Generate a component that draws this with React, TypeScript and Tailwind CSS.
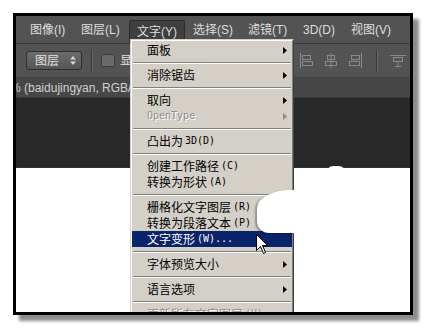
import React from "react";

type Item =
  | { kind: "sep" }
  | {
      kind: "item";
      cn: string;
      en?: string;
      arrow?: boolean;
      disabled?: boolean;
      active?: boolean;
    };

const items: Item[] = [
  { kind: "item", cn: "面板", arrow: true },
  { kind: "sep" },
  { kind: "item", cn: "消除锯齿", arrow: true },
  { kind: "sep" },
  { kind: "item", cn: "取向", arrow: true },
  { kind: "item", cn: "", en: "OpenType", arrow: true, disabled: true },
  { kind: "sep" },
  { kind: "item", cn: "凸出为 ", en: "3D(D)" },
  { kind: "sep" },
  { kind: "item", cn: "创建工作路径", en: "(C)" },
  { kind: "item", cn: "转换为形状", en: "(A)" },
  { kind: "sep" },
  { kind: "item", cn: "栅格化文字图层", en: "(R)" },
  { kind: "item", cn: "转换为段落文本", en: "(P)" },
  { kind: "item", cn: "文字变形", en: "(W)...", active: true },
  { kind: "sep" },
  { kind: "item", cn: "字体预览大小", arrow: true },
  { kind: "sep" },
  { kind: "item", cn: "语言选项", arrow: true },
  { kind: "sep" },
  { kind: "item", cn: "更新所有文字图层", en: "(U)", disabled: true },
];

function Arrow({ color }: { color: string }) {
  return (
    <svg width="4" height="7" viewBox="0 0 4 7" className="ml-auto">
      <path d="M0 0 L4 3.5 L0 7 Z" fill={color} />
    </svg>
  );
}

function AlignIcon({ kind }: { kind: "left" | "center" | "right" }) {
  const c = "#8a8a8a";
  return (
    <svg width="14" height="15" viewBox="0 0 14 15">
      {kind === "left" && (
        <>
          <rect x="0" y="0" width="1" height="15" fill={c} />
          <rect x="2.5" y="2.5" width="8" height="4" fill="none" stroke={c} />
          <rect x="2.5" y="8.5" width="10" height="4" fill="none" stroke={c} />
        </>
      )}
      {kind === "center" && (
        <>
          <rect x="6.5" y="0" width="1" height="15" fill={c} />
          <rect x="3.5" y="2.5" width="7" height="4" fill="none" stroke={c} />
          <rect x="1.5" y="8.5" width="11" height="4" fill="none" stroke={c} />
        </>
      )}
      {kind === "right" && (
        <>
          <rect x="13" y="0" width="1" height="15" fill={c} />
          <rect x="3.5" y="2.5" width="8" height="4" fill="none" stroke={c} />
          <rect x="1.5" y="8.5" width="10" height="4" fill="none" stroke={c} />
        </>
      )}
    </svg>
  );
}

function TopAlignIcon() {
  const c = "#8a8a8a";
  return (
    <svg width="16" height="12" viewBox="0 0 16 12">
      <rect x="0" y="0" width="16" height="1" fill={c} />
      <rect x="3.5" y="2.5" width="9" height="4" fill="none" stroke={c} />
      <rect x="7.5" y="7" width="1" height="4" fill={c} />
      <rect x="5" y="11" width="6" height="1" fill={c} />
    </svg>
  );
}

export default function App() {
  const menubar = [
    { t: "图像(I)", cls: "pl-[14px] w-[65px]" },
    { t: "图层(L)", cls: "w-[48px]" },
  ];
  const menubar2 = [
    { t: "选择(S)", cls: "ml-[8px] w-[55px]" },
    { t: "滤镜(T)", cls: "w-[55px]" },
    { t: "3D(D)", cls: "w-[48px]" },
    { t: "视图(V)", cls: "w-[50px]" },
  ];
  return (
    <div className="w-[425px] h-[328px] bg-white pt-[13px] pl-[13px] font-['Liberation_Sans','Noto_Sans_CJK_SC',sans-serif]">
      <div className="relative w-[400px] h-[302px] border-[3px] border-black overflow-hidden flex flex-col shadow-[6px_6px_3px_rgba(0,0,0,0.45)]">
        {/* Menu bar */}
        <div className="h-[28px] shrink-0 bg-[#535353] border-b border-[#3a3a3a] flex items-stretch text-[12px] text-[#dedede]">
          {menubar.map((m) => (
            <div key={m.t} className={`${m.cls} flex items-center shrink-0 whitespace-nowrap`}>
              {m.t}
            </div>
          ))}
          <div className="w-[56px] shrink-0 mt-[4px] bg-[#3f3f3f] border border-[#2c2c2c] border-b-0 rounded-t-[2px] pl-[7px] flex items-start pt-[2px] whitespace-nowrap">
            文字(Y)
          </div>
          {menubar2.map((m) => (
            <div key={m.t} className={`${m.cls} flex items-center shrink-0 whitespace-nowrap`}>
              {m.t}
            </div>
          ))}
        </div>

        {/* Toolbar */}
        <div className="h-[33px] shrink-0 bg-[#535353] flex items-center text-[12px] text-[#e0e0e0]">
          <div className="ml-[10px] w-[56px] h-[19px] rounded-[3px] border border-[#2e2e2e] bg-gradient-to-b from-[#6c6c6c] to-[#555555] flex items-center pl-[8px] pr-[5px]">
            <span>图层</span>
            <svg width="6" height="9" viewBox="0 0 6 9" className="ml-auto">
              <path d="M0 3.5 L3 0 L6 3.5 Z" fill="#d8d8d8" />
              <path d="M0 5.5 L3 9 L6 5.5 Z" fill="#d8d8d8" />
            </svg>
          </div>
          <div className="ml-[9px] w-[2px] h-[22px] flex">
            <div className="w-px bg-[#3a3a3a]" />
            <div className="w-px bg-[#676767]" />
          </div>
          <div className="ml-[8px] w-[14px] h-[13px] rounded-[2px] bg-[#6a6a6a] border border-[#3c3c3c]" />
          <span className="ml-[5px]">显</span>
          <div className="ml-[168px] flex items-center gap-[10px]">
            <AlignIcon kind="left" />
            <AlignIcon kind="center" />
            <AlignIcon kind="right" />
          </div>
          <div className="ml-[14px] w-[2px] h-[22px] flex">
            <div className="w-px bg-[#3a3a3a]" />
            <div className="w-px bg-[#676767]" />
          </div>
          <div className="ml-[12px]">
            <TopAlignIcon />
          </div>
        </div>

        {/* Document tab bar */}
        <div className="h-[21px] shrink-0 bg-[#474747] border-t border-[#3c3c3c] border-b border-dotted border-b-[#2a2a2a] flex items-center overflow-hidden text-[12px] text-[#d0d0d0] font-['Liberation_Sans',sans-serif]">
          <span className="ml-[-26px] whitespace-nowrap">100% (baidujingyan, RGB/8)</span>
        </div>

        {/* Dark canvas */}
        <div className="h-[70px] shrink-0 bg-[#282828] border-b border-dotted border-[#3a3a3a]" />

        {/* White document */}
        <div className="flex-1 bg-white" />

        {/* white bump */}
        <div className="absolute left-[311px] top-[150px] w-[18px] h-[6px] rounded-t-full bg-white" />

        {/* Dropdown menu */}
        <div className="absolute left-[114px] top-[23px] w-[164px] border border-t-[#d4d0c8] border-l-[#d4d0c8] border-r-[#404040] border-b-[#404040] bg-[#d4d0c8]">
          <div className="border border-t-white border-l-white border-r-[#808080] border-b-[#808080] py-px">
            {items.map((it, i) =>
              it.kind === "sep" ? (
                <div key={i} className="h-[9px] flex flex-col justify-center px-px">
                  <div className="h-px bg-[#808080]" />
                  <div className="h-px bg-white" />
                </div>
              ) : (
                <div
                  key={i}
                  className={`h-[16px] flex items-center pl-[15px] pr-[5px] whitespace-nowrap ${
                    it.active ? "bg-[#0a246a] text-white" : it.disabled ? "text-[#8c8c8c] [text-shadow:1px_1px_0_#ffffff]" : "text-black"
                  }`}
                >
                  {it.cn && <span className="text-[12px] font-['Noto_Sans_CJK_SC',sans-serif] leading-none">{it.cn}</span>}
                  {it.en && (
                    <span className={`text-[10px] font-['DejaVu_Sans_Mono',monospace] leading-none ${it.cn ? "ml-[2px]" : ""}`}>
                      {it.en}
                    </span>
                  )}
                  {it.arrow && <Arrow color={it.disabled ? "#8c8c8c" : "#000000"} />}
                </div>
              )
            )}
          </div>
        </div>

        {/* white annotation blob over the menu */}
        <div className="absolute left-[241px] top-[174px] w-[37px] h-[43px] bg-white rounded-tl-[34px_18px] rounded-bl-[12px] shadow-[-2px_1px_2px_rgba(0,0,0,0.3)]" />

        {/* cursor */}
        <svg width="13" height="21" viewBox="0 0 13 21" className="absolute left-[240px] top-[218px]">
          <path d="M0.5 0.5 L0.5 16.5 L4.5 12.5 L7.5 19.5 L9.5 18.5 L6.5 11.5 L11.5 11.5 Z" fill="#ffffff" stroke="#000000" strokeWidth="1" />
        </svg>
      </div>
    </div>
  );
}
